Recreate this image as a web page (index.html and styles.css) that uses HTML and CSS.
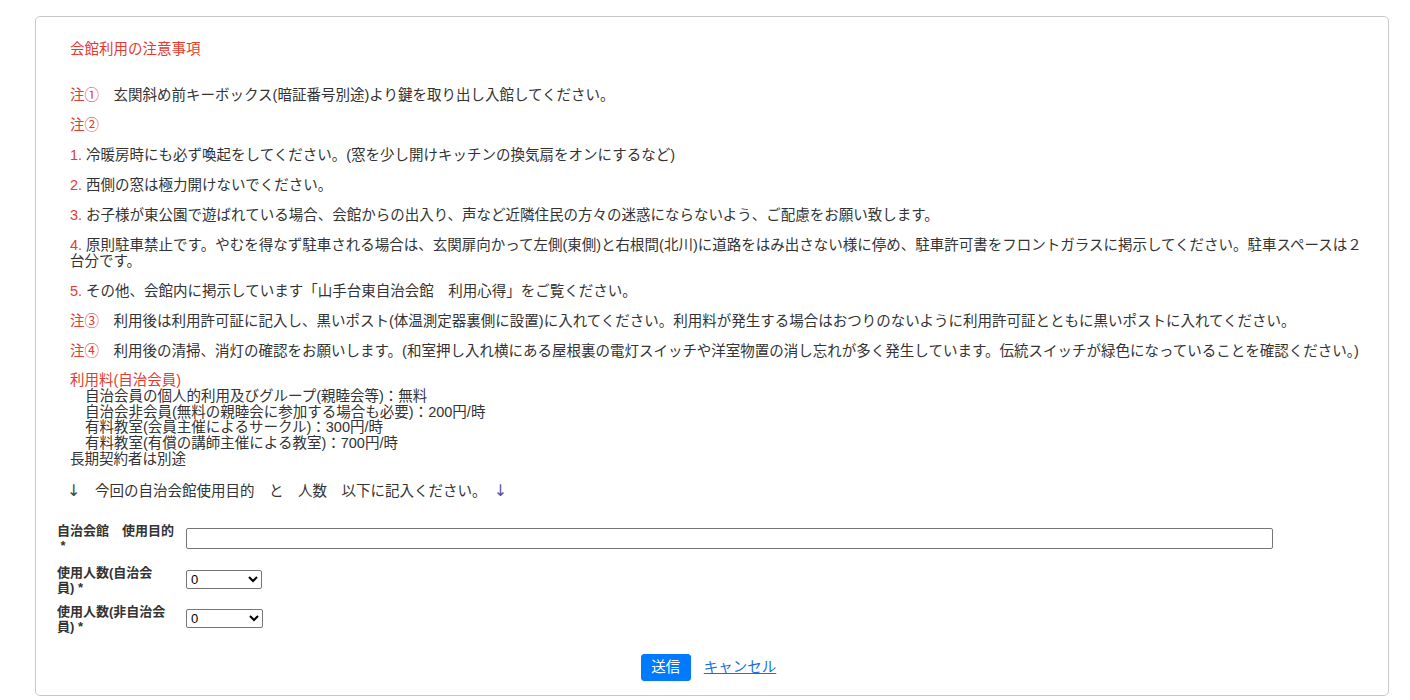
FILE: index.html
```html
<!DOCTYPE html>
<html lang="ja">
<head>
<meta charset="utf-8">
<title>会館利用の注意事項</title>
<link rel="stylesheet" href="styles.css">
</head>
<body>
<div class="card">
  <div class="notice">
    <p class="title red">会館利用の注意事項</p>
    <p><span class="red">注①</span>　玄関斜め前キーボックス(暗証番号別途)より鍵を取り出し入館してください。</p>
    <p><span class="red">注②</span></p>
    <p><span class="red">1.</span> 冷暖房時にも必ず喚起をしてください。(窓を少し開けキッチンの換気扇をオンにするなど)</p>
    <p><span class="red">2.</span> 西側の窓は極力開けないでください。</p>
    <p><span class="red">3.</span> お子様が東公園で遊ばれている場合、会館からの出入り、声など近隣住民の方々の迷惑にならないよう、ご配慮をお願い致します。</p>
    <p><span class="red">4.</span> 原則駐車禁止です。やむを得なず駐車される場合は、玄関扉向かって左側(東側)と右根間(北川)に道路をはみ出さない様に停め、駐車許可書をフロントガラスに掲示してください。駐車スペースは２台分です。</p>
    <p><span class="red">5.</span> その他、会館内に掲示しています「山手台東自治会館　利用心得」をご覧ください。</p>
    <p><span class="red">注③</span>　利用後は利用許可証に記入し、黒いポスト(体温測定器裏側に設置)に入れてください。利用料が発生する場合はおつりのないように利用許可証とともに黒いポストに入れてください。</p>
    <p><span class="red">注④</span>　利用後の清掃、消灯の確認をお願いします。(和室押し入れ横にある屋根裏の電灯スイッチや洋室物置の消し忘れが多く発生しています。伝統スイッチが緑色になっていることを確認ください。)</p>
    <div class="fees">
      <div class="red">利用料(自治会員)</div>
      <div class="indent">自治会員の個人的利用及びグループ(親睦会等)：無料</div>
      <div class="indent">自治会非会員(無料の親睦会に参加する場合も必要)：200円/時</div>
      <div class="indent">有料教室(会員主催によるサークル)：300円/時</div>
      <div class="indent">有料教室(有償の講師主催による教室)：700円/時</div>
      <div>長期契約者は別途</div>
    </div>
    <p class="guide"><span class="arrow arrow1">↓</span>　今回の自治会館使用目的　と　人数　以下に記入ください。　<span class="arrow arrow2">↓</span></p>
  </div>
  <form class="form">
    <div class="row row1">
      <label class="label" for="purpose">自治会館　使用目的<br>&nbsp;*</label>
      <input class="text-input" id="purpose" type="text">
    </div>
    <div class="row row2">
      <label class="label" for="n1">使用人数(自治会<br>員) *</label>
      <select class="num" id="n1"><option>0</option></select>
    </div>
    <div class="row row3">
      <label class="label" for="n2">使用人数(非自治会<br>員) *</label>
      <select class="num num2" id="n2"><option>0</option></select>
    </div>
    <div class="actions">
      <button type="button" class="btn">送信</button>
      <a href="#" class="cancel">キャンセル</a>
    </div>
  </form>
</div>
</body>
</html>
```
FILE: styles.css
```css
html, body {
  margin: 0;
  padding: 0;
  background: #fff;
}
body {
  font-family: "Liberation Sans", Arial, "Noto Sans CJK JP", sans-serif;
  font-size: 14px;
  line-height: 16px;
  color: #333;
}
.card {
  margin: 16px 21px 0 35px;
  height: 680px;
  box-sizing: border-box;
  border: 1px solid #c9c9c9;
  border-radius: 5px;
  padding: 24px 20px 0 21px;
}
.notice {
  padding-left: 13px;
  width: 1300px;
  font-size: 14.5px;
}
.notice p {
  margin: 0 0 14px 0;
}
.notice p.title {
  margin-bottom: 30px;
}
.red {
  color: #e53a2e;
}
.fees {
  margin-bottom: 15px;
  line-height: 15.8px;
}
.indent {
  padding-left: 15px;
}
.guide {
  color: #333;
}
.arrow {
  font-family: "DejaVu Sans", sans-serif;
  font-size: 16px;
  line-height: 16px;
}
.arrow1 {
  color: #3b4b3f;
  margin-left: -3px;
}
.arrow2 {
  color: #5b4fa3;
}
.form {
  margin-top: 24px;
}
.row {
  display: flex;
  align-items: flex-start;
}
.row1 { margin-bottom: 12px; }
.row2 { margin-bottom: 9px; }
.label {
  width: 129px;
  flex: none;
  font-size: 13px;
  line-height: 15px;
  font-weight: bold;
  color: #333;
}
.text-input {
  margin: 5px 0 0 0;
  width: 1087px;
  height: 21px;
  box-sizing: border-box;
  border: 1px solid #767676;
  border-radius: 2px;
  padding: 1px 2px;
  font-size: 13px;
}
.num {
  margin: 5px 0 0 0;
  width: 76px;
  height: 19px;
  font-size: 13px;
  font-family: "Liberation Sans", Arial, sans-serif;
  border: 1px solid #767676;
  border-radius: 2px;
  padding: 0;
  background: #fff;
  color: #000;
}
.num2 { width: 77px; }
.actions {
  display: flex;
  justify-content: center;
  align-items: center;
  gap: 13px;
  margin-top: 20px;
  padding-right: 8px;
}
.btn {
  background: #007bff;
  color: #fff;
  border: 1px solid #007bff;
  border-radius: 3px;
  font-family: "Liberation Sans", "Noto Sans CJK JP", sans-serif;
  font-size: 14.5px;
  line-height: 17px;
  width: 50px;
  height: 27px;
  padding: 0;
}
.cancel {
  color: #1a6fe0;
  text-decoration: underline;
  font-size: 14.5px;
}
```
